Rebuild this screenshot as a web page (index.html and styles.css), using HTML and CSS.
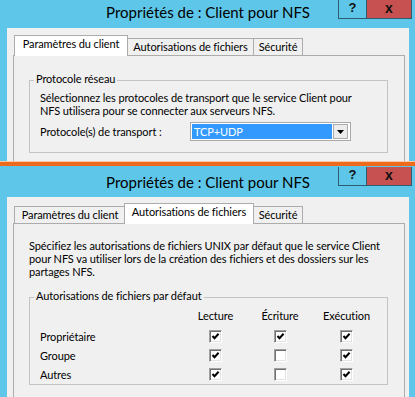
FILE: index.html
```html
<!DOCTYPE html>
<html lang="fr">
<head>
<meta charset="utf-8">
<title>Propriétés de : Client pour NFS</title>
<link rel="stylesheet" href="styles.css">
</head>
<body>
<div class="shot shot-a">
  <div class="titlebar">
    <div class="title">Propriétés de : Client pour NFS</div>
    <div class="caption-btns"><span class="cbtn help">?</span><span class="cbtn close">x</span></div>
  </div>
  <div class="window-body">
    <div class="tabs">
      <div class="tab tab-1 active">Paramètres du client</div>
      <div class="tab tab-2">Autorisations de fichiers</div>
      <div class="tab tab-3">Sécurité</div>
    </div>
    <div class="panel">
      <fieldset class="group group-proto">
        <legend>Protocole réseau</legend>
        <div class="group-body">
          <p class="text">Sélectionnez les protocoles de transport que le service Client pour<br>NFS utilisera pour se connecter aux serveurs NFS.</p>
          <div class="field-row">
            <span class="field-label">Protocole(s) de transport :</span>
            <div class="combo">
              <span class="combo-value">TCP+UDP</span>
              <span class="combo-btn"><svg width="7" height="4" viewBox="0 0 7 4"><polygon points="0,0 7,0 3.5,4" fill="#000"/></svg></span>
            </div>
          </div>
        </div>
      </fieldset>
    </div>
  </div>
</div>
<div class="separator"></div>
<div class="shot shot-b">
  <div class="titlebar">
    <div class="title">Propriétés de : Client pour NFS</div>
    <div class="caption-btns"><span class="cbtn help">?</span><span class="cbtn close">x</span></div>
  </div>
  <div class="window-body">
    <div class="tabs">
      <div class="tab tab-1">Paramètres du client</div>
      <div class="tab tab-2 active">Autorisations de fichiers</div>
      <div class="tab tab-3">Sécurité</div>
    </div>
    <div class="panel">
      <p class="text intro">Spécifiez les autorisations de fichiers UNIX par défaut que le service Client<br>pour NFS va utiliser lors de la création des fichiers et des dossiers sur les<br>partages NFS.</p>
      <fieldset class="group group-perm">
        <legend>Autorisations de fichiers par défaut</legend>
        <div class="group-body">
          <div class="perm-grid">
            <span class="head-spacer"></span><span class="col-head">Lecture</span><span class="col-head">Écriture</span><span class="col-head">Exécution</span>
            <span class="row-label">Propriétaire</span>
            <span class="cell"><span class="check on"></span></span>
            <span class="cell"><span class="check on"></span></span>
            <span class="cell"><span class="check on"></span></span>
            <span class="row-label">Groupe</span>
            <span class="cell"><span class="check on"></span></span>
            <span class="cell"><span class="check"></span></span>
            <span class="cell"><span class="check on"></span></span>
            <span class="row-label">Autres</span>
            <span class="cell"><span class="check on"></span></span>
            <span class="cell"><span class="check"></span></span>
            <span class="cell"><span class="check on"></span></span>
          </div>
        </div>
      </fieldset>
    </div>
  </div>
</div>
</body>
</html>
```
FILE: styles.css
```css
* { box-sizing: border-box; }
html, body { margin: 0; padding: 0; }
body {
  width: 415px;
  height: 397px;
  overflow: hidden;
  background: #5ec7e9;
  font-family: Lato, "Noto Sans", sans-serif;
  font-size: 11px;
  letter-spacing: -0.1px;
  color: #000;
}
.shot { overflow: hidden; background: #5ec7e9; }
.shot-a { height: 161px; }
.shot-b { height: 231px; }
.separator {
  height: 5px;
  background: #f06a1c;
  border-top: 1px solid #f8caa8;
}

/* title bar */
.titlebar {
  display: grid;
  grid-template-columns: 1fr auto 1fr;
  align-items: start;
  padding: 0 3px 0 4px;
}
.shot-a .titlebar { height: 28px; }
.shot-b .titlebar { height: 31px; }
.title {
  grid-column: 2;
  font-size: 15px;
  letter-spacing: 0;
  line-height: 20px;
  white-space: nowrap;
  color: #000;
}
.shot-a .title { margin-top: 2px; }
.shot-b .title { margin-top: 6px; }
.caption-btns {
  grid-column: 3;
  justify-self: end;
  display: flex;
}
.shot-b .caption-btns { margin-top: 1px; }
.cbtn {
  height: 19px;
  border: 1px solid #2c5d70;
  border-top: none;
  text-align: center;
  font-family: "Liberation Sans", Arial, sans-serif;
  font-weight: bold;
  letter-spacing: 0;
  line-height: 16px;
  color: #111;
}
.help { width: 29px; background: #5ec7e9; font-size: 13px; }
.close { width: 46px; margin-left: -1px; background: #c75050; font-size: 14px; }

/* window body */
.window-body {
  margin: 0 6px 0 7px;
  background: #f0f0f0;
  padding: 7px 4px 0 6px;
  height: 400px;
}
.shot-b .window-body { padding-top: 6px; }

.tabs {
  display: flex;
  align-items: flex-end;
  height: 20px;
  padding-left: 1px;
}
.tab {
  position: relative;
  height: 17px;
  border: 1px solid #acacac;
  border-bottom: none;
  background: #f0f0f0;
  line-height: 16px;
  text-align: center;
  white-space: nowrap;
}
.tab + .tab { margin-left: -1px; }
.tab.active {
  z-index: 1;
  height: 21px;
  margin-bottom: -1px;
  padding-bottom: 4px;
  background: #fff;
}
.tab-1 { width: 114px; }
.tab-2 { width: 127px; }
.tab-3 { width: 50px; }
.shot-b .tab-1 { width: 112px; }
.shot-b .tab-2 { width: 130px; margin-left: -2px; }

.panel {
  border: 1px solid #acacac;
  background: #f0f0f0;
  height: 400px;
}

.text {
  margin: 0;
  line-height: 13px;
  white-space: nowrap;
}
.intro { margin: 15px 0 0 15px; }

/* group box */
.group {
  border: 1px solid #c4c4c4;
  margin: 0 16px 0 15px;
  padding: 0;
  min-width: 0;
}
.group legend {
  margin-left: 4px;
  padding: 0 2px 4px;
  line-height: 15px;
  white-space: nowrap;
}
.group-proto { margin-top: 15px; }
.group-proto .group-body { padding: 1px 10px 11px 10px; }
.group-perm { margin-top: 10px; }
.group-perm .group-body { padding: 1px 10px 0 10px; }

.field-row {
  display: flex;
  align-items: center;
  margin-top: 5px;
  height: 19px;
}
.field-label { width: 150px; line-height: 15px; white-space: nowrap; }
.combo {
  width: 161px;
  height: 19px;
  border: 1px solid #a9a9a9;
  background: #fff;
  padding: 1px 2px 1px 1px;
  display: flex;
}
.combo-value {
  flex: 1;
  background: #3399ff;
  color: #fff;
  line-height: 15px;
  padding-left: 2px;
}
.combo-btn {
  width: 15px;
  margin-left: 1px;
  border: 1px solid #acacac;
  background: #ececec;
  display: flex;
  align-items: center;
  justify-content: center;
}
.combo-btn svg { display: block; }

/* permissions grid */
.perm-grid {
  display: grid;
  grid-template-columns: 145px 61px 68px 65px;
  grid-template-rows: 19px 19px 19px 19px;
}
.head-spacer, .col-head { margin-bottom: 4px; }
.col-head {
  text-align: center;
  line-height: 15px;
  white-space: nowrap;
}
.row-label { line-height: 15px; align-self: center; white-space: nowrap; }
.cell { display: flex; align-items: center; justify-content: center; }
.check {
  width: 13px;
  height: 13px;
  background: #fff;
  border-top: 1px solid #a0a0a0;
  border-left: 1px solid #a0a0a0;
  border-right: 1px solid #fff;
  border-bottom: 1px solid #fff;
  box-shadow: inset 1px 1px 0 #6f6f6f, inset -1px -1px 0 #e3e3e3;
}
.check.on {
  background: #fff url("data:image/svg+xml;utf8,<svg xmlns='http://www.w3.org/2000/svg' width='11' height='11'><path d='M2.5 5 L4.5 7.2 L8.6 2.8' fill='none' stroke='black' stroke-width='2'/></svg>") no-repeat 0 0;
}
```
